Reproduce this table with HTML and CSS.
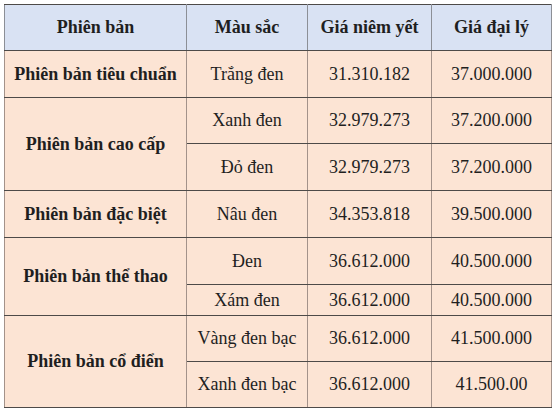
FILE: index.html
```html
<!DOCTYPE html>
<html>
<head>
<meta charset="utf-8">
<link rel="stylesheet" href="styles.css">
</head>
<body>
<table class="t">
  <colgroup>
    <col class="c1"><col class="c2"><col class="c3"><col class="c4">
  </colgroup>
  <tr class="head h46">
    <th>Phiên bản</th><th>Màu sắc</th><th>Giá niêm yết</th><th>Giá đại lý</th>
  </tr>
  <tr class="h47">
    <td class="name">Phiên bản tiêu chuẩn</td><td>Trắng đen</td><td>31.310.182</td><td>37.000.000</td>
  </tr>
  <tr class="h46">
    <td class="name" rowspan="2">Phiên bản cao cấp</td><td>Xanh đen</td><td>32.979.273</td><td>37.200.000</td>
  </tr>
  <tr class="h47">
    <td>Đỏ đen</td><td>32.979.273</td><td>37.200.000</td>
  </tr>
  <tr class="h47">
    <td class="name">Phiên bản đặc biệt</td><td>Nâu đen</td><td>34.353.818</td><td>39.500.000</td>
  </tr>
  <tr class="h47">
    <td class="name" rowspan="2">Phiên bản thể thao</td><td>Đen</td><td>36.612.000</td><td>40.500.000</td>
  </tr>
  <tr class="h31">
    <td>Xám đen</td><td>36.612.000</td><td>40.500.000</td>
  </tr>
  <tr class="h46">
    <td class="name" rowspan="2">Phiên bản cổ điển</td><td>Vàng đen bạc</td><td>36.612.000</td><td>41.500.000</td>
  </tr>
  <tr class="h46">
    <td>Xanh đen bạc</td><td>36.612.000</td><td>41.500.00</td>
  </tr>
</table>
</body>
</html>
```

FILE: styles.css
```css
body {
  margin: 4px 0 0 4px;
  background: #ffffff;
}

.t {
  border-collapse: collapse;
  table-layout: fixed;
  width: 547px;
  border: 1px solid #6e6e6e;
}

.c1 { width: 182px; }
.c2 { width: 121px; }
.c3 { width: 124px; }
.c4 { width: 120px; }

.t td, .t th {
  font-family: "Liberation Serif", serif;
  font-size: 18px;
  color: #1f1f1f;
  padding: 0;
  text-align: center;
  vertical-align: middle;
  border-top: 1px solid #4d4a48;
  border-bottom: 1px solid #4d4a48;
  border-left: 1px solid #a3928a;
  border-right: 1px solid #a3928a;
  background: #fce4d4;
}

.t th {
  background: #d9e2f3;
  font-weight: bold;
  border-left-color: #8c8f96;
  border-right-color: #8c8f96;
}

.t td.name {
  font-weight: bold;
}

.h46 { height: 46px; }
.h47 { height: 47px; }
.h31 { height: 31px; }
```
